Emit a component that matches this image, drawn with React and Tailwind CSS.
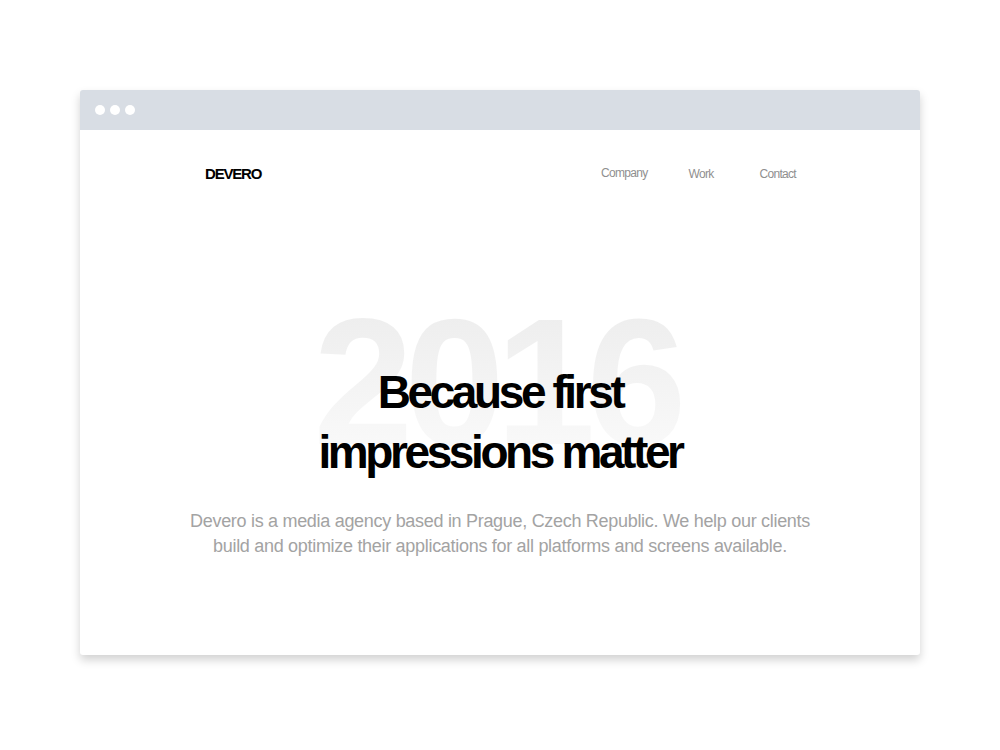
export default function App() {
  const font = { fontFamily: '"Liberation Sans", Arial, sans-serif' };
  return (
    <div className="min-h-[750px] bg-white pt-[90px] px-[80px]" style={font}>
      <div className="h-[565px] rounded-[3px] bg-white shadow-[0_5px_10px_rgba(0,0,0,0.18)] overflow-hidden flex flex-col">
        <div className="h-[40px] shrink-0 bg-[#d8dde4] flex items-center gap-[5px] pl-[15px]">
          <span className="w-[10px] h-[10px] rounded-full bg-white" />
          <span className="w-[10px] h-[10px] rounded-full bg-white" />
          <span className="w-[10px] h-[10px] rounded-full bg-white" />
        </div>
        <nav className="mt-[34px] h-[20px] flex items-center justify-between pl-[125px] pr-[124px]">
          <div className="text-[15px] font-bold tracking-[-1.2px] text-black">DEVERO</div>
          <div className="flex items-center text-[12px] text-[#8f8f8f] tracking-[-0.7px]">
            <a className="-mt-[2px]">Company</a>
            <a className="ml-[41px]">Work</a>
            <a className="ml-[46px]">Contact</a>
          </div>
        </nav>
        <section className="flex flex-col items-center">
          <div className="relative mt-[178px]">
            <div className="absolute left-1/2 -translate-x-1/2 -top-[70px] text-[180px] leading-none font-bold tracking-[-9px] bg-gradient-to-b from-[#ececec] to-[#fbfbfb] bg-clip-text text-transparent select-none whitespace-nowrap pr-[9px]">
              2016
            </div>
            <h1 className="relative text-[46px] leading-[60px] font-bold tracking-[-3.4px] text-black text-center">
              Because first<br />impressions matter
            </h1>
          </div>
          <p className="mt-[27px] text-[18px] leading-[25px] text-[#a3a3a3] text-center tracking-[-0.3px]">
            Devero is a media agency based in Prague, Czech Republic. We help our clients<br />
            build and optimize their applications for all platforms and screens available.
          </p>
        </section>
      </div>
    </div>
  );
}
